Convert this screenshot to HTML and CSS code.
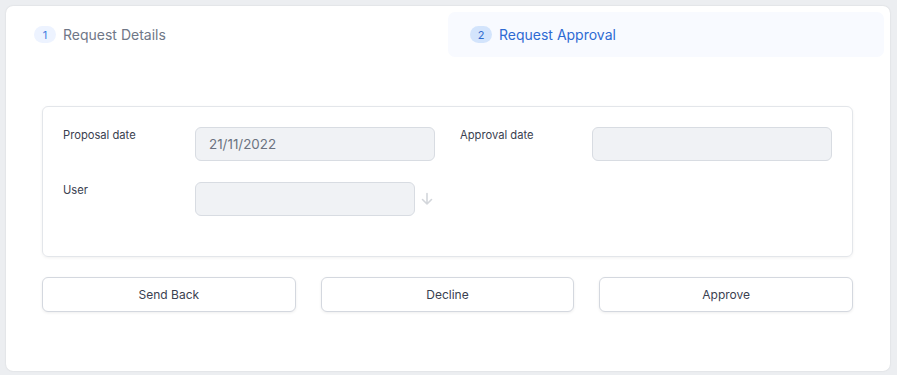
FILE: index.html
```html
<!DOCTYPE html>
<html lang="en">
<head>
  <meta charset="UTF-8">
  <title>Request Approval</title>
  <link rel="stylesheet" href="styles.css">
</head>
<body>

<div class="panel">
  <div class="steps">
    <div class="step">
      <span class="step-num">1</span>
      <span class="step-label">Request Details</span>
    </div>
    <div class="step active">
      <span class="step-num">2</span>
      <span class="step-label">Request Approval</span>
    </div>
  </div>

  <div class="content">
    <div class="form-card">
      <div class="field">
        <label>Proposal date</label>
        <div class="control">
          <input type="text" value="21/11/2022" disabled>
        </div>
      </div>
      <div class="field">
        <label>Approval date</label>
        <div class="control">
          <input type="text" disabled>
        </div>
      </div>
      <div class="field">
        <label>User</label>
        <div class="control">
          <input type="text" disabled>
          <svg class="arrow" width="12" height="14" viewBox="0 0 12 14">
            <path d="M6 1.5V12M1.5 7.5L6 12l4.5-4.5" fill="none" stroke="#d3d6db" stroke-width="1.6" stroke-linecap="round" stroke-linejoin="round"/>
          </svg>
        </div>
      </div>
    </div>

    <div class="actions">
      <button>Send Back</button>
      <button>Decline</button>
      <button>Approve</button>
    </div>
  </div>
</div>

</body>
</html>
```

FILE: styles.css
```css
body {
  margin: 0;
  padding: 6px 7px 4px 6px;
  background: #eceef1;
  font-family: Inter, 'Noto Sans', sans-serif;
}
.panel {
  background: #fff;
  border-radius: 7px;
  box-shadow: 0 0 2px rgba(0,0,0,0.12);
  height: 365px;
  box-sizing: border-box;
}
.steps {
  display: grid;
  grid-template-columns: 1fr 1fr;
  padding: 6px;
}
.step {
  display: flex;
  align-items: center;
  height: 45px;
  padding-left: 22px;
  border-radius: 7px;
}
.step.active {
  background: #f8faff;
}
.step-num {
  display: inline-flex;
  justify-content: center;
  align-items: center;
  width: 22px;
  height: 17px;
  border-radius: 9px;
  background: #edf3ff;
  color: #3f7be0;
  font-size: 11px;
  margin-right: 7px;
}
.step-label {
  font-size: 14px;
  color: #6f7787;
}
.active .step-num {
  background: #d3e4fc;
  color: #2f6ccf;
}
.active .step-label {
  color: #2e6ad3;
}
.content {
  padding: 43px 37px 0 36px;
}
.form-card {
  display: grid;
  grid-template-columns: 372px 372px;
  column-gap: 25px;
  row-gap: 21px;
  padding: 20px 20px 40px 20px;
  border: 1px solid #e3e6ea;
  border-radius: 6px;
  box-shadow: 0 1px 3px rgba(0,0,0,0.06);
}
.field {
  display: flex;
}
.field label {
  width: 132px;
  flex-shrink: 0;
  font-size: 11.2px;
  color: #3a4150;
  padding-top: 1px;
}
.control {
  display: flex;
  align-items: center;
  flex: 1;
}
.control input {
  width: 100%;
  height: 34px;
  box-sizing: border-box;
  border: 1px solid #d8dce2;
  border-radius: 6px;
  background: #f0f2f5;
  padding: 0 13px;
  font-family: inherit;
  font-size: 13.4px;
  color: #6b7280;
}
.arrow {
  flex-shrink: 0;
  margin: 0 2px 0 6px;
}
.actions {
  display: grid;
  grid-template-columns: 1fr 1fr 1fr;
  column-gap: 25px;
  margin-top: 20px;
}
.actions button {
  height: 35px;
  border: 1px solid #d4d8df;
  border-radius: 6px;
  background: #fff;
  box-shadow: 0 1px 3px rgba(0,0,0,0.07);
  font-family: inherit;
  font-size: 12px;
  color: #3a4150;
  cursor: pointer;
}
.actions button:hover {
  background: #f7f8fa;
}
```
